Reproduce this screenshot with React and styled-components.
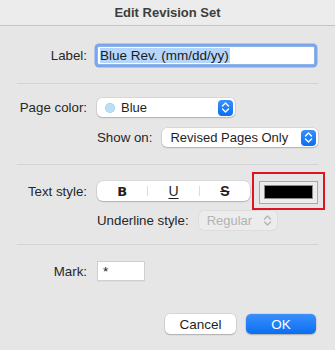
import styled, { createGlobalStyle } from "styled-components";

const GlobalStyle = createGlobalStyle`
	html, body {
		margin: 0;
		padding: 0;
		background: #e6e6e6;
	}
	body {
		font-family: "Liberation Sans", Arial, sans-serif;
		font-size: 13px;
		color: #262626;
	}
`;

function Stepper({ disabled }) {
	return (
		<StepperBox disabled={disabled}>
			<svg width="9" height="13" viewBox="0 0 9 13" fill="none">
				<path
					d="M1.5 5 L4.5 2 L7.5 5 M1.5 8 L4.5 11 L7.5 8"
					stroke={disabled ? "#b4b4b4" : "#ffffff"}
					strokeWidth="1.4"
					strokeLinecap="round"
					strokeLinejoin="round"
				/>
			</svg>
		</StepperBox>
	);
}

export default function App() {
	return (
		<>
			<GlobalStyle />
			<Dialog>
				<TitleBar>Edit Revision Set</TitleBar>
				<Body>
					<Section top={17} bottom={15}>
						<Row height={25}>
							<Label>Label:</Label>
							<TextField width={218} focused>
								<Selected>Blue Rev. (mm/dd/yy)</Selected>
							</TextField>
						</Row>
					</Section>

					<Section top={14} bottom={17} gap={11}>
						<Row height={19}>
							<Label>Page color:</Label>
							<Popup width={138}>
								<Swatch />
								<PopupText>Blue</PopupText>
								<Stepper />
							</Popup>
						</Row>
						<Row height={19} indent>
							<SubLabel>Show on:</SubLabel>
							<Popup width={156}>
								<PopupText>Revised Pages Only</PopupText>
								<Stepper />
							</Popup>
						</Row>
					</Section>

					<Section top={7} bottom={14}>
						<Row height={38}>
							<Label>Text style:</Label>
							<Segmented>
								<Segment>
									<BoldGlyph>B</BoldGlyph>
								</Segment>
								<Divider />
								<Segment>
									<UnderGlyph>U</UnderGlyph>
								</Segment>
								<Divider />
								<Segment>
									<StrikeGlyph>S</StrikeGlyph>
								</Segment>
							</Segmented>
							<Highlight>
								<ColorWell>
									<ColorFill />
								</ColorWell>
							</Highlight>
						</Row>
						<Row height={20} indent>
							<SubLabel>Underline style:</SubLabel>
							<Popup width={78} disabled>
								<PopupText disabled>Regular</PopupText>
								<Stepper disabled />
							</Popup>
						</Row>
					</Section>

					<Section top={16} bottom={0} plain>
						<Row height={20}>
							<Label>Mark:</Label>
							<TextField width={48}>*</TextField>
						</Row>
					</Section>

					<Buttons>
						<Button>Cancel</Button>
						<Button primary>OK</Button>
					</Buttons>
				</Body>
			</Dialog>
		</>
	);
}

const Dialog = styled.div`
	width: 335px;
	height: 350px;
	background: #e6e6e6;
	display: flex;
	flex-direction: column;
	overflow: hidden;
`;

const TitleBar = styled.div`
	height: 25px;
	display: flex;
	align-items: center;
	justify-content: center;
	background: #ececec;
	border-bottom: 1px solid #c4c4c4;
	font-weight: 700;
	font-size: 13px;
	color: #3d3d3d;
`;

const Body = styled.div`
	padding: 0 17px;
	display: flex;
	flex-direction: column;
`;

const Section = styled.div`
	display: flex;
	flex-direction: column;
	gap: ${(p) => p.gap || 0}px;
	padding-top: ${(p) => p.top}px;
	padding-bottom: ${(p) => p.bottom}px;
	border-bottom: ${(p) => (p.plain ? "none" : "1px solid #d4d4d4")};
`;

const Row = styled.div`
	display: flex;
	align-items: center;
	height: ${(p) => p.height}px;
	padding-left: ${(p) => (p.indent ? 80 : 0)}px;
	& > * {
		flex-shrink: 0;
	}
`;

const Label = styled.div`
	width: 70px;
	margin-right: 10px;
	text-align: right;
	white-space: nowrap;
	font-size: 13.3px;
`;

const SubLabel = styled.div`
	margin-right: 10px;
	white-space: nowrap;
	font-size: 13.3px;
`;

const TextField = styled.div`
	box-sizing: border-box;
	width: ${(p) => p.width}px;
	height: ${(p) => (p.focused ? 19 : 20)}px;
	background: #ffffff;
	border: 1px solid ${(p) => (p.focused ? "#8fb3e8" : "#cfcfcf")};
	box-shadow: ${(p) =>
		p.focused ? "0 0 0 2.5px #7aa7ec" : "0 0.5px 0 rgba(0,0,0,0.08)"};
	border-radius: ${(p) => (p.focused ? 2 : 0)}px;
	display: flex;
	align-items: center;
	padding-left: ${(p) => (p.focused ? 2 : 5)}px;
	font-size: 13.5px;
	color: #1a1a1a;
`;

const Selected = styled.span`
	background: #b5d5fb;
	line-height: 15px;
	padding-right: 1px;
`;

const Popup = styled.div`
	box-sizing: border-box;
	width: ${(p) => p.width}px;
	height: 19px;
	background: ${(p) => (p.disabled ? "#ececec" : "#ffffff")};
	border-radius: 5px;
	box-shadow: ${(p) =>
		p.disabled
			? "0 0 0 0.5px rgba(0,0,0,0.08)"
			: "0 0 0 0.5px rgba(0,0,0,0.12), 0 1px 1.5px rgba(0,0,0,0.18)"};
	display: flex;
	align-items: center;
	padding: 0 2px 0 8px;
	gap: 6px;
`;

const PopupText = styled.span`
	flex: 1;
	color: ${(p) => (p.disabled ? "#b3b3b3" : "#1f1f1f")};
	white-space: nowrap;
`;

const Swatch = styled.span`
	width: 10px;
	height: 10px;
	border-radius: 50%;
	background: #b8e0f8;
	box-shadow: inset 0 0 0 0.5px rgba(0, 0, 0, 0.12);
`;

const StepperBox = styled.span`
	width: 15px;
	height: 16px;
	border-radius: 4px;
	background: ${(p) =>
		p.disabled ? "transparent" : "linear-gradient(#3b8ffc, #0a6ff2)"};
	display: flex;
	align-items: center;
	justify-content: center;
`;

const Segmented = styled.div`
	width: 153px;
	height: 20px;
	background: #ffffff;
	border-radius: 6px;
	box-shadow: 0 0 0 0.5px rgba(0, 0, 0, 0.12), 0 1px 1.5px rgba(0, 0, 0, 0.18);
	display: flex;
	align-items: center;
`;

const Segment = styled.div`
	flex: 1;
	display: flex;
	justify-content: center;
	align-items: center;
	font-size: 14px;
	color: #1f1f1f;
`;

const Divider = styled.span`
	width: 1px;
	height: 10px;
	background: #dcdcdc;
`;

const BoldGlyph = styled.span`
	font-weight: 900;
	font-family: "DejaVu Sans", sans-serif;
	font-size: 13px;
`;

const UnderGlyph = styled.span`
	text-decoration: underline;
	text-underline-offset: 2px;
`;

const StrikeGlyph = styled.span`
	text-decoration: line-through;
	font-weight: 700;
`;

const Highlight = styled.div`
	box-sizing: border-box;
	width: 73px;
	height: 38px;
	margin-left: 2px;
	border: 2px solid #dd1522;
	display: flex;
	align-items: center;
	justify-content: center;
	padding-top: 2px;
`;

const ColorWell = styled.div`
	box-sizing: border-box;
	width: 59px;
	height: 23px;
	border: 1px solid #a9a9a9;
	background: #ececec;
	display: flex;
	align-items: center;
	justify-content: center;
`;

const ColorFill = styled.div`
	box-sizing: border-box;
	width: 49px;
	height: 14px;
	background: #000000;
	border: 1px solid #8c8c8c;
`;

const Buttons = styled.div`
	display: flex;
	justify-content: flex-end;
	gap: 10px;
	margin-top: 33px;
	padding-right: 2px;
`;

const Button = styled.button`
	width: ${(p) => (p.primary ? 70 : 71)}px;
	height: 20px;
	border: none;
	border-radius: 5px;
	font-family: "Liberation Sans", Arial, sans-serif;
	font-size: 13.5px;
	color: ${(p) => (p.primary ? "#ffffff" : "#1f1f1f")};
	background: ${(p) =>
		p.primary ? "linear-gradient(#3b8ffc, #0b6ff2)" : "#ffffff"};
	box-shadow: 0 0 0 0.5px rgba(0, 0, 0, 0.12), 0 1px 1.5px rgba(0, 0, 0, 0.2);
	padding: 0;
`;
